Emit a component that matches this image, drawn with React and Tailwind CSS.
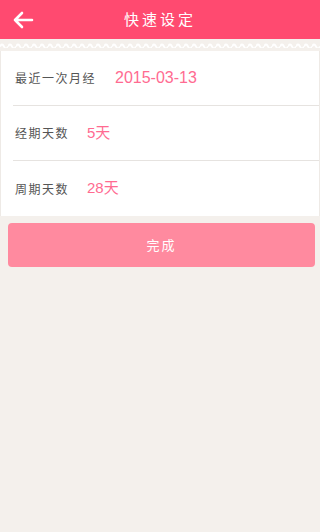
export default function App() {
  const rows = [
    { label: '最近一次月经', value: '2015-03-13', gap: 'w-[100px]', big: true },
    { label: '经期天数', value: '5天', gap: 'w-[72px]' },
    { label: '周期天数', value: '28天', gap: 'w-[72px]' },
  ];
  return (
    <div className="w-[320px] h-[532px] bg-[#f4f0ec] flex flex-col font-['Noto_Sans_CJK_SC',sans-serif]">
      <header className="h-[39px] bg-[#ff4a70] flex items-center relative">
        <svg className="ml-[12px]" width="22" height="18" viewBox="0 0 22 18" fill="none" stroke="white" strokeWidth="2.6" strokeLinecap="round" strokeLinejoin="round">
          <path d="M20 9H3M10 2L3 9l7 7" />
        </svg>
        <h1 className="absolute inset-0 flex items-center justify-center text-white text-[15px] tracking-[3px]">快速设定</h1>
      </header>
      <div className="h-[12px] flex items-center">
        <svg width="320" height="6" viewBox="0 0 320 6">
          <defs>
            <pattern id="w" width="8" height="6" patternUnits="userSpaceOnUse">
              <path d="M0 4.5 Q2 0.5 4 4.5 T8 4.5" fill="none" stroke="white" strokeWidth="1.8" />
            </pattern>
          </defs>
          <rect width="320" height="6" fill="url(#w)" />
        </svg>
      </div>
      <div className="bg-white border-x border-[#eeeae6] flex flex-col">
        {rows.map((r, i) => (
          <div key={i} className={`flex items-center ml-[12px] pl-[2px] ${i < 2 ? 'h-[55px] border-b border-[#e6e3e0]' : 'h-[55px]'}`}>
            <span className={`text-[12px] text-[#555] tracking-[1.5px] ${r.gap}`}>{r.label}</span>
            <span className={`text-[#ff6b91] ${r.big ? 'text-[16px]' : 'text-[15px]'} font-['Liberation_Sans','Noto_Sans_CJK_SC',sans-serif]`}>{r.value}</span>
          </div>
        ))}
      </div>
      <div className="pl-[8px] pr-[5px] pt-[7px]">
        <button className="w-full h-[44px] rounded-[4px] bg-[#ff8a9f] text-white text-[13px] tracking-[2px]">完成</button>
      </div>
    </div>
  );
}
